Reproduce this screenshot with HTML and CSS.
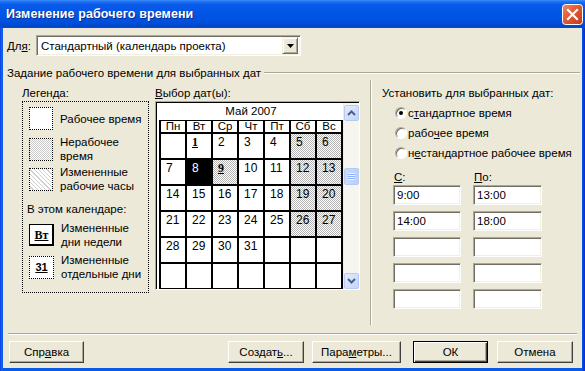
FILE: index.html
```html
<!DOCTYPE html>
<html lang="ru">
<head>
  <meta charset="UTF-8" />
  <title>Изменение рабочего времени</title>
  <link rel="stylesheet" href="styles.css">
</head>
<body>
  <div class="window">
    <div class="titlebar">
      <span class="title">Изменение рабочего времени</span>
      <span class="close">
        <svg width="21" height="21" viewBox="0 0 21 21">
          <defs>
            <linearGradient id="cg" x1="0" y1="0" x2="1" y2="1">
              <stop offset="0" stop-color="#f0896a"/>
              <stop offset="0.45" stop-color="#e05a33"/>
              <stop offset="1" stop-color="#c23a17"/>
            </linearGradient>
          </defs>
          <rect x="0.5" y="0.5" width="20" height="20" rx="3" fill="url(#cg)" stroke="#fff"/>
          <path d="M6 6 L15 15 M15 6 L6 15" stroke="#fff" stroke-width="2.2" stroke-linecap="square"/>
        </svg>
      </span>
    </div>

    <div class="body">
      <div class="for-row">
        <span class="for-label">Дл<u>я</u>:</span>
        <div class="combo">
          <span class="combo-text">Стандартный (календарь проекта)</span>
          <span class="combo-btn">
            <svg width="7" height="4" viewBox="0 0 7 4"><path d="M0 0 H7 L3.5 4 Z" fill="#000"/></svg>
          </span>
        </div>
      </div>

      <div class="group-head">
        <span>Задание рабочего времени для выбранных дат</span>
        <span class="etch"></span>
      </div>

      <div class="main">
        <div class="legend-col">
          <div class="caption">Легенда:</div>
          <div class="legend-box">
            <div class="leg-item">
              <span class="swatch"></span>
              <span class="leg-text">Рабочее время</span>
            </div>
            <div class="leg-item mt5">
              <span class="swatch nonwork"></span>
              <span class="leg-text">Нерабочее<br>время</span>
            </div>
            <div class="leg-item mt2">
              <span class="swatch changed"></span>
              <span class="leg-text">Измененные<br>рабочие часы</span>
            </div>
            <div class="cal-note">В этом календаре:</div>
            <div class="leg-item mt5">
              <span class="swatch day-mark"><u>Вт</u></span>
              <span class="leg-text">Измененные<br>дни недели</span>
            </div>
            <div class="leg-item mt4">
              <span class="swatch date-mark"><u>31</u></span>
              <span class="leg-text">Измененные<br>отдельные дни</span>
            </div>
          </div>
        </div>

        <div class="cal-col">
          <div class="caption"><u>В</u>ыбор дат(ы):</div>
          <div class="cal-box">
            <div class="cal-area">
              <div class="month">Май 2007</div>
              <div class="cal-grid">
                <div class="head">Пн</div><div class="head">Вт</div><div class="head">Ср</div><div class="head">Чт</div><div class="head">Пт</div><div class="head">Сб</div><div class="head">Вс</div>

                <div class="day"></div>
                <div class="day mark"><u>1</u></div>
                <div class="day">2</div>
                <div class="day">3</div>
                <div class="day">4</div>
                <div class="day off">5</div>
                <div class="day off">6</div>

                <div class="day">7</div>
                <div class="day selected">8</div>
                <div class="day off mark"><u>9</u></div>
                <div class="day">10</div>
                <div class="day">11</div>
                <div class="day off">12</div>
                <div class="day off">13</div>

                <div class="day">14</div>
                <div class="day">15</div>
                <div class="day">16</div>
                <div class="day">17</div>
                <div class="day">18</div>
                <div class="day off">19</div>
                <div class="day off">20</div>

                <div class="day">21</div>
                <div class="day">22</div>
                <div class="day">23</div>
                <div class="day">24</div>
                <div class="day">25</div>
                <div class="day off">26</div>
                <div class="day off">27</div>

                <div class="day">28</div>
                <div class="day">29</div>
                <div class="day">30</div>
                <div class="day">31</div>
                <div class="day"></div>
                <div class="day"></div>
                <div class="day"></div>

                <div class="day"></div><div class="day"></div><div class="day"></div><div class="day"></div><div class="day"></div><div class="day"></div><div class="day"></div>
              </div>
            </div>
            <div class="scrollbar">
              <span class="sb-btn">
                <svg width="9" height="6" viewBox="0 0 9 6"><path d="M1 5 L4.5 1.5 L8 5" fill="none" stroke="#4d6185" stroke-width="2"/></svg>
              </span>
              <span class="sb-track top"></span>
              <span class="sb-thumb"><span class="grip"></span></span>
              <span class="sb-track"></span>
              <span class="sb-btn">
                <svg width="9" height="6" viewBox="0 0 9 6"><path d="M1 1 L4.5 4.5 L8 1" fill="none" stroke="#4d6185" stroke-width="2"/></svg>
              </span>
            </div>
          </div>
        </div>

        <div class="vsep"></div>

        <div class="set-col">
          <div class="set-title">Установить для выбранных дат:</div>
          <div class="radios">
            <div class="radio-row"><span class="radio"><span class="dot"></span></span>с<u>т</u>андартное время</div>
            <div class="radio-row"><span class="radio"></span>рабо<u>ч</u>ее время</div>
            <div class="radio-row"><span class="radio"></span>н<u>е</u>стандартное рабочее время</div>
          </div>
          <div class="times">
            <span class="time-label"><u>С</u>:</span>
            <span class="time-label"><u>П</u>о:</span>
            <span class="field">9:00</span>
            <span class="field">13:00</span>
            <span class="field">14:00</span>
            <span class="field">18:00</span>
            <span class="field"></span>
            <span class="field"></span>
            <span class="field"></span>
            <span class="field"></span>
            <span class="field"></span>
            <span class="field"></span>
          </div>
        </div>
      </div>

      <div class="hsep"></div>

      <div class="buttons">
        <button class="btn help">Спр<u>а</u>вка</button>
        <button class="btn create">Создат<u>ь</u>...</button>
        <button class="btn params">Пара<u>м</u>етры...</button>
        <button class="btn ok">ОК</button>
        <button class="btn cancel">Отмена</button>
      </div>
    </div>
  </div>
</body>
</html>
```

FILE: styles.css
```css
body {
  margin: 0;
  font-family: "Liberation Sans", Arial, sans-serif;
  font-size: 11.5px;
  color: #000;
}

.window {
  width: 585px;
  height: 371px;
  background: linear-gradient(to right, #0831d9 0, #1662f0 1px, #0a5ae8 3px, #0a5ae8 582px, #0831d9 584px);
  display: flex;
  flex-direction: column;
  overflow: hidden;
}

.titlebar {
  height: 28px;
  flex: none;
  display: flex;
  align-items: center;
  padding-left: 6px;
  background: linear-gradient(to bottom, #3d8ff8 0, #1a6df5 2px, #0a5ae8 5px, #0055e5 14px, #0050dc 22px, #0046c8 27px, #0a4ecf 28px);
}

.title {
  color: #fff;
  font-weight: bold;
  font-size: 12.5px;
  text-shadow: 1px 1px #0c2a8c;
  letter-spacing: 0.1px;
}

.close {
  margin-left: auto;
  margin-right: 2px;
  margin-top: 1px;
  width: 21px;
  height: 21px;
  display: flex;
}

.body {
  flex: 1;
  margin: 0 3px 3px;
  background: #ece9d8;
  padding: 7px 4px 0;
}

/* "Для" row */
.for-row {
  display: flex;
  align-items: center;
  height: 21px;
}

.for-label {
  width: 29px;
}

.combo {
  width: 265px;
  height: 21px;
  box-sizing: border-box;
  background: #fff;
  border: 1px solid;
  border-color: #aca899 #fff #fff #aca899;
  box-shadow: inset 1px 1px #716f64, inset -1px -1px #f1efe2;
  display: flex;
  align-items: center;
  padding: 0 2px 0 4px;
}

.combo-text {
  flex: 1;
}

.combo-btn {
  width: 16px;
  height: 17px;
  box-sizing: border-box;
  background: #ece9d8;
  border: 1px solid;
  border-color: #f1efe2 #716f64 #716f64 #f1efe2;
  box-shadow: inset 1px 1px #fff, inset -1px -1px #aca899;
  display: flex;
  align-items: center;
  justify-content: center;
}

/* group header */
.group-head {
  margin-top: 10px;
  height: 14px;
  display: flex;
  align-items: center;
  margin-right: -2px;
}

.etch {
  flex: 1;
  margin-left: 3px;
  border-top: 1px solid #aca899;
  border-bottom: 1px solid #fff;
}

.main {
  display: flex;
  height: 245px;
}

.caption {
  height: 13px;
  line-height: 13px;
}

/* legend */
.legend-col {
  width: 127px;
  margin-left: 15px;
  padding-top: 7px;
}

.legend-box {
  margin-top: 1px;
  height: 192px;
  box-sizing: border-box;
  border: 1px dotted #000;
  padding: 5px 0 0 6px;
}

.leg-item {
  display: flex;
  align-items: center;
  gap: 7px;
}

.mt2 { margin-top: 2px; }
.mt4 { margin-top: 4px; }
.mt5 { margin-top: 5px; }

.leg-text {
  line-height: 14px;
}

.swatch {
  width: 24px;
  height: 23px;
  flex: none;
  box-sizing: border-box;
  border: 1px dotted #000;
  background: #fff;
  display: flex;
  align-items: center;
  justify-content: center;
  font-weight: bold;
  font-size: 11px;
}

.swatch.nonwork {
  background: repeating-conic-gradient(#c8c8c8 0 25%, #fff 0 50%) 0 0 / 2px 2px;
}

.swatch.changed {
  background: repeating-linear-gradient(45deg, #fff 0 2px, #cfcfcf 2px 3px);
}

.swatch.day-mark {
  width: 25px;
  height: 22px;
  border: 1px solid #000;
  box-shadow: inset -1px -1px #000;
  font-family: "Liberation Serif", serif;
  font-size: 12px;
}

.swatch.date-mark {
  width: 25px;
}

.cal-note {
  margin-top: 9px;
  margin-left: -2px;
  line-height: 14px;
}

/* calendar */
.cal-col {
  width: 205px;
  margin-left: 6px;
  padding-top: 7px;
}

.cal-box {
  margin-top: 1px;
  height: 189px;
  box-sizing: border-box;
  background: #fff;
  border: 1px solid;
  border-color: #aca899 #fff #fff #aca899;
  box-shadow: inset 1px 1px #000;
  display: flex;
  padding: 1px 0 0 1px;
}

.cal-area {
  flex: 1;
  overflow: hidden;
  padding-left: 2px;
}

.month {
  width: 184px;
  height: 17px;
  line-height: 17px;
  text-align: center;
}

.cal-grid {
  display: grid;
  grid-template-columns: repeat(7, 24px);
  grid-template-rows: 11px repeat(6, 24px);
  gap: 2px;
  padding: 1px 2px 2px 2px;
  width: max-content;
  background: #000;
}

.head {
  background: #fff;
  text-align: center;
  line-height: 11px;
  font-size: 11.5px;
}

.day {
  background: #fff;
  padding: 2px 0 0 5px;
  line-height: 12px;
  font-size: 12px;
}

.day.off {
  background: repeating-conic-gradient(#b4b4b4 0 25%, #fff 0 50%) 0 0 / 2px 2px;
}

.day.mark {
  font-family: "Liberation Serif", serif;
  font-weight: bold;
  font-size: 12px;
}

.day.selected {
  background: #000;
  color: #fff;
}

.scrollbar {
  width: 15px;
  flex: none;
  background: #f6f5f0;
  display: flex;
  flex-direction: column;
  padding-top: 2px;
  border-left: 1px solid #eeede5;
}

.sb-btn {
  height: 16px;
  box-sizing: border-box;
  border: 1px solid #b7caf5;
  border-radius: 2px;
  background: linear-gradient(135deg, #e4ecfd, #c3d3fd);
  display: flex;
  align-items: center;
  justify-content: center;
}

.sb-track {
  flex: 1;
}

.sb-track.top {
  flex: 0 0 47px;
}

.sb-thumb {
  height: 17px;
  box-sizing: border-box;
  border: 1px solid #b7caf5;
  border-radius: 2px;
  background: linear-gradient(to right, #cad9fd, #bccffc);
  display: flex;
  align-items: center;
  justify-content: center;
}

.grip {
  width: 7px;
  height: 7px;
  background: repeating-linear-gradient(to bottom, #eef3fe 0 1px, #8cb0f8 1px 2px);
}

/* separators */
.vsep {
  width: 0;
  margin-left: 10px;
  border-left: 1px solid #aca899;
  border-right: 1px solid #fff;
}

.hsep {
  margin: 8px 1px 0;
  border-top: 1px solid #aca899;
  border-bottom: 1px solid #fff;
}

/* right panel */
.set-col {
  margin-left: 10px;
  padding-top: 7px;
}

.set-title {
  line-height: 13px;
  margin-bottom: 3px;
}

.radios {
  display: flex;
  flex-direction: column;
  gap: 1px;
  padding-left: 13px;
}

.radio-row {
  height: 19px;
  display: flex;
  align-items: center;
}

.radio {
  width: 12px;
  height: 12px;
  box-sizing: border-box;
  border-radius: 50%;
  background: #fff;
  border: 1px solid;
  border-color: #aca899 #fff #fff #aca899;
  box-shadow: inset 1px 1px #716f64;
  margin-right: 1px;
  display: flex;
  align-items: center;
  justify-content: center;
}

.dot {
  width: 4px;
  height: 4px;
  border-radius: 50%;
  background: #000;
}

.times {
  margin: 9px 0 0 11px;
  display: grid;
  grid-template-columns: 68px 69px;
  column-gap: 12px;
  row-gap: 6px;
}

.time-label {
  line-height: 13px;
  padding-left: 1px;
  margin-bottom: -5px;
}

.field {
  height: 20px;
  box-sizing: border-box;
  background: #fff;
  border: 1px solid;
  border-color: #aca899 #fff #fff #aca899;
  box-shadow: inset 1px 1px #716f64, inset -1px -1px #f1efe2;
  padding: 0 3px;
  line-height: 18px;
}

/* buttons */
.buttons {
  display: flex;
  margin-top: 6px;
}

.btn {
  height: 22px;
  width: 75px;
  padding: 0;
  background: #ece9d8;
  border: 1px solid;
  border-color: #fff #404040 #404040 #fff;
  box-shadow: inset -1px -1px #aca899;
  font-family: inherit;
  font-size: 11.5px;
  color: #000;
}

.btn.help { margin-left: 2px; }
.btn.create { margin-left: auto; width: 76px; }
.btn.params { margin-left: 8px; width: 89px; }
.btn.ok {
  margin-left: 12px;
  border-color: #000;
  box-shadow: inset 1px 1px #fff, inset -1px -1px #404040, inset -2px -2px #aca899;
}
.btn.cancel { margin-left: 9px; width: 76px; margin-right: 5px; }
```
